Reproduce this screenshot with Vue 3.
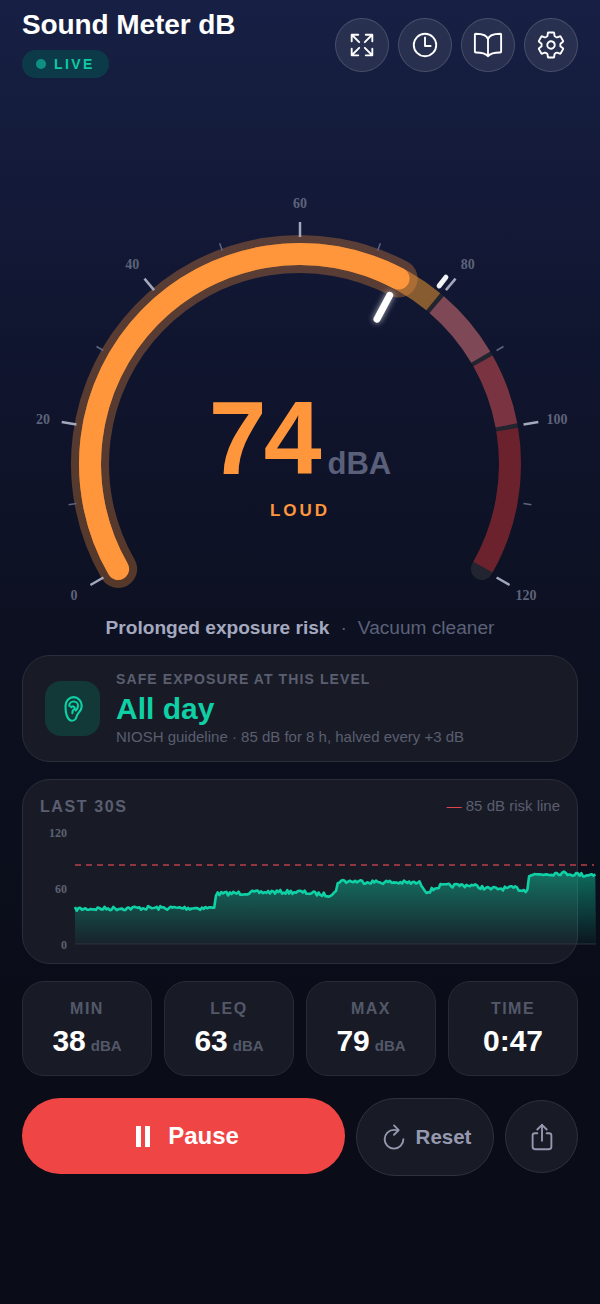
<template>
  <div class="page">
    <header class="top">
      <div>
        <h1 class="title">Sound Meter dB</h1>
        <div class="live"><span class="dot"></span>LIVE</div>
      </div>
      <div class="top-btns">
        <button class="round">
          <svg viewBox="0 0 512 512" class="ico"><path d="M432 320v112H320M421.800 421.770 304 304M80 192V80h112M90.200 90.230 208 208M320 80h112v112M421.770 90.200 304 208M192 432H80V320M90.230 421.800 208 304" /></svg>
        </button>
        <button class="round">
          <svg viewBox="0 0 512 512" class="ico"><path d="M256 64C150 64 64 150 64 256s86 192 192 192 192-86 192-192S362 64 256 64z" /><path d="M256 128v144h96" /></svg>
        </button>
        <button class="round">
          <svg viewBox="0 0 512 512" class="ico"><path d="M256 160c16-63.160 76.430-95.410 208-96a15.940 15.940 0 0 1 16 16v288a16 16 0 0 1-16 16c-128 0-177.450 25.810-208 64-30.370-38-80-64-208-64-9.880 0-16-8.050-16-17.930V80a15.940 15.940 0 0 1 16-16c131.570.59 192 32.840 208 96zM256 160v288" /></svg>
        </button>
        <button class="round">
          <svg viewBox="0 0 512 512" class="ico"><path d="M262.290 192.310a64 64 0 1 0 57.400 57.400 64.130 64.130 0 0 0-57.400-57.400zM416.390 256a154.340 154.340 0 0 1-1.530 20.790l45.210 35.460a10.810 10.810 0 0 1 2.450 13.750l-42.770 74a10.810 10.810 0 0 1-13.140 4.590l-44.900-18.080a16.110 16.110 0 0 0-15.170 1.750A164.480 164.480 0 0 1 325 400.800a15.940 15.940 0 0 0-8.820 12.140l-6.730 47.890a11.080 11.080 0 0 1-10.680 9.170h-85.540a11.110 11.110 0 0 1-10.690-8.870l-6.720-47.820a16.070 16.070 0 0 0-9-12.220 155.300 155.300 0 0 1-21.460-12.570 16 16 0 0 0-15.110-1.710l-44.890 18.070a10.810 10.810 0 0 1-13.140-4.580l-42.770-74a10.800 10.800 0 0 1 2.450-13.750l38.210-30a16.050 16.050 0 0 0 6-14.080c-.36-4.170-.58-8.330-.58-12.500s.21-8.270.58-12.350a16 16 0 0 0-6.070-13.940l-38.190-30A10.810 10.810 0 0 1 49.480 186l42.770-74a10.810 10.810 0 0 1 13.140-4.590l44.900 18.080a16.110 16.110 0 0 0 15.170-1.750A164.480 164.480 0 0 1 187 111.200a15.940 15.940 0 0 0 8.820-12.140l6.730-47.890A11.080 11.080 0 0 1 213.230 42h85.540a11.110 11.110 0 0 1 10.690 8.870l6.720 47.820a16.070 16.070 0 0 0 9 12.220 155.300 155.300 0 0 1 21.460 12.570 16 16 0 0 0 15.110 1.710l44.890-18.070a10.810 10.810 0 0 1 13.140 4.580l42.770 74a10.800 10.800 0 0 1-2.450 13.750l-38.210 30a16.050 16.050 0 0 0-6.050 14.080c.33 4.140.55 8.300.55 12.470z" /></svg>
        </button>
      </div>
    </header>

    <!-- gauge -->
    <div class="gauge">
      <svg width="600" height="430" viewBox="0 190 600 430" class="gauge-svg">
        <path :d="arc(0, 120)" class="track" />
        <path v-for="s in segments" :key="s.from" :d="arc(s.from + 0.3, s.to - 0.3)" fill="none" stroke-width="22" :stroke="s.color" />
        <path :d="arc(0, level)" class="halo" />
        <path :d="arc(0, level)" class="fill" />
        <line v-for="t in ticks" :key="t.v" :x1="t.x1" :y1="t.y1" :x2="t.x2" :y2="t.y2" :class="t.major ? 'tick-major' : 'tick-minor'" />
        <text v-for="t in labels" :key="t.v" :x="t.x" :y="t.y" class="tick-label">{{ t.v }}</text>
        <line :x1="maxMark.x1" :y1="maxMark.y1" :x2="maxMark.x2" :y2="maxMark.y2" class="max-mark" />
        <line :x1="needle.x1" :y1="needle.y1" :x2="needle.x2" :y2="needle.y2" class="needle" />
      </svg>
      <div class="readout">
        <div class="reading"><span class="num">74</span><span class="unit">dBA</span></div>
        <div class="band">LOUD</div>
      </div>
    </div>

    <p class="caption"><b>Prolonged exposure risk</b><i>·</i><span>Vacuum cleaner</span></p>

    <section class="card safe">
      <div class="ear">
        <svg viewBox="0 0 24 24" width="30" height="30"><path d="M6 9.500a6.500 7 0 0 1 13 0c0 3-1.600 4.400-3 6.200-1 1.300-1.200 3-2 4.300-1 1.400-3.200 1.600-4.600.8-1.600-.9-2.100-2.600-2.600-4.300C6.200 14.500 6 12 6 9.500z" /><path d="M9 9.500a3.500 3.500 0 0 1 7 0c0 1.500-.8 2.600-1.800 3.600M10.500 10.500c1-1 2.700-.7 2.900.6.100 1-.9 1.500-1.600 2.200l-.3 2" /></svg>
      </div>
      <div>
        <div class="safe-label">SAFE EXPOSURE AT THIS LEVEL</div>
        <div class="safe-value">All day</div>
        <div class="safe-sub">NIOSH guideline · 85 dB for 8 h, halved every +3 dB</div>
      </div>
    </section>

    <section class="card history">
      <div class="hist-head">
        <span class="hist-title">LAST 30S</span>
        <span class="hist-legend"><em>—</em> 85 dB risk line</span>
      </div>
      <svg class="chart" width="556" height="128" viewBox="40 824 556 128">
        <defs>
          <linearGradient id="area" x1="0" y1="0" x2="0" y2="1">
            <stop offset="0" stop-color="#10d0a5" stop-opacity="0.48" />
            <stop offset="1" stop-color="#10d0a5" stop-opacity="0.04" />
          </linearGradient>
        </defs>
        <text x="67" y="837" class="axis">120</text>
        <text x="67" y="893" class="axis">60</text>
        <text x="67" y="949" class="axis">0</text>
        <line x1="75" y1="944" x2="596" y2="944" class="base" />
        <line x1="75" y1="865" x2="594" y2="865" class="risk" />
        <path :d="areaPath" fill="url(#area)" />
        <path :d="linePath" class="trace" />
      </svg>
    </section>

    <section class="stats">
      <div v-for="s in stats" :key="s.label" class="stat">
        <div class="stat-label">{{ s.label }}</div>
        <div class="stat-value">{{ s.value }}<small v-if="s.unit">{{ s.unit }}</small></div>
      </div>
    </section>

    <section class="actions">
      <button class="pause">
        <span class="bars"><i></i><i></i></span>
        Pause
      </button>
      <button class="reset">
        <svg viewBox="0 0 512 512" width="30" height="30" class="ico-grey"><path d="M320 146s24.360-12-64-12a160 160 0 1 0 160 160" /><path d="M256 58l80 80-80 80" /></svg>
        Reset
      </button>
      <button class="share">
        <svg viewBox="0 0 512 512" width="30" height="30" class="ico-grey"><path d="M336 192h40a40 40 0 0 1 40 40v192a40 40 0 0 1-40 40H136a40 40 0 0 1-40-40V232a40 40 0 0 1 40-40h40" /><path d="M336 128l-80-80-80 80" /><path d="M256 321V48" /></svg>
      </button>
    </section>
  </div>
</template>

<script setup>
import { computed } from 'vue'

const CX = 300
const CY = 464
const R = 210
const level = 74

// 0 dB sits at -120deg from the top, 120 dB at +120deg
function angle(v) {
  return ((-120 + (v / 120) * 240) * Math.PI) / 180
}
function polar(v, r) {
  const a = angle(v)
  return { x: +(CX + r * Math.sin(a)).toFixed(2), y: +(CY - r * Math.cos(a)).toFixed(2) }
}
function arc(from, to) {
  const a = polar(from, R)
  const b = polar(to, R)
  const large = (to - from) * 2 > 180 ? 1 : 0
  return `M${a.x} ${a.y}A${R} ${R} 0 ${large} 1 ${b.x} ${b.y}`
}
function radial(v, r1, r2) {
  const a = polar(v, r1)
  const b = polar(v, r2)
  return { x1: a.x, y1: a.y, x2: b.x, y2: b.y }
}

const segments = [
  { from: 0, to: 80, color: '#875c30' },
  { from: 80, to: 90, color: '#7f4856' },
  { from: 90, to: 100, color: '#7a3340' },
  { from: 100, to: 120, color: '#6c222d' }
]

const ticks = []
for (let v = 0; v <= 120; v += 10) {
  const major = v % 20 === 0
  ticks.push({ v, major, ...radial(v, 227, major ? 242 : 235) })
}
const labels = []
for (let v = 0; v <= 120; v += 20) {
  const p = polar(v, 261)
  labels.push({ v, x: p.x, y: p.y + 5 })
}
const needle = radial(level, 164, 191)
const maxMark = radial(79, 226, 237)

// [x, y] steps of the last 30 s trace
const X0 = 75
const X1 = 596
const knots = [
  [75, 909], [140, 908], [214, 908], [216, 894], [270, 892], [300, 892], [328, 895], [336, 892],
  [338, 881], [420, 883], [427, 892], [440, 886], [470, 885], [490, 889], [515, 888], [527, 891],
  [529, 875], [560, 873], [585, 875], [596, 874]
]
function baseY(x) {
  for (let i = 1; i < knots.length; i++) {
    if (x <= knots[i][0]) {
      const [ax, ay] = knots[i - 1]
      const [bx, by] = knots[i]
      return ay + ((x - ax) / (bx - ax)) * (by - ay)
    }
  }
  return 874
}
let seed = 7
function noise() {
  seed = (seed * 16807) % 2147483647
  return seed / 2147483647 - 0.5
}
const points = []
for (let x = X0; x <= X1; x += 1.74) {
  points.push([+x.toFixed(1), +(baseY(x) + noise() * 4).toFixed(1)])
}
const linePath = computed(() => 'M' + points.map((p) => p.join(' ')).join('L'))
const areaPath = computed(() => `${linePath.value}L${X1} 944L${X0} 944Z`)

const stats = [
  { label: 'MIN', value: '38', unit: 'dBA' },
  { label: 'LEQ', value: '63', unit: 'dBA' },
  { label: 'MAX', value: '79', unit: 'dBA' },
  { label: 'TIME', value: '0:47' }
]
</script>

<style>
html, body { margin: 0; background: #0a0d18; }
</style>

<style scoped>
.page {
  width: 600px;
  height: 1304px;
  box-sizing: border-box;
  overflow: hidden;
  padding: 0 22px;
  background: linear-gradient(180deg, #172044 0%, #111631 24%, #0c1020 50%, #0a0d18 78%, #0a0d18 100%);
  font-family: "Liberation Sans", Arial, sans-serif;
}
button { font-family: inherit; cursor: pointer; }

.top { display: flex; justify-content: space-between; height: 190px; }
.title { margin: 8px 0 0; font-size: 28px; line-height: 34px; font-weight: 700; color: #fff; letter-spacing: -0.1px; }
.live {
  display: inline-flex;
  align-items: center;
  gap: 8px;
  margin-top: 8px;
  height: 28px;
  padding: 0 14px;
  border-radius: 14px;
  background: #0d3a48;
  color: #0fc9a4;
  font-size: 14px;
  font-weight: 700;
  letter-spacing: 2.4px;
}
.dot { width: 10px; height: 10px; border-radius: 50%; background: #0e8f80; }
.top-btns { display: flex; gap: 9px; margin-top: 18px; height: 54px; }
.round {
  width: 54px;
  height: 54px;
  padding: 0;
  display: flex;
  align-items: center;
  justify-content: center;
  border-radius: 50%;
  background: rgba(255, 255, 255, 0.08);
  border: 1px solid rgba(255, 255, 255, 0.15);
}
.ico { width: 30px; height: 30px; fill: none; stroke: #fff; stroke-width: 32; stroke-linecap: round; stroke-linejoin: round; }

.gauge { position: relative; margin: 0 -22px; height: 430px; }
.gauge-svg { display: block; }
.track { fill: none; stroke: #22242f; stroke-width: 22; stroke-linecap: round; }
.halo { fill: none; stroke: rgba(255, 150, 60, 0.3); stroke-width: 38; stroke-linecap: round; }
.fill { fill: none; stroke: #ff963c; stroke-width: 22; stroke-linecap: round; }
.tick-major { stroke: #a3a8bd; stroke-width: 2.5; }
.tick-minor { stroke: #5f6580; stroke-width: 1.5; }
.tick-label { font-family: "Liberation Serif", serif; font-size: 14px; font-weight: 700; fill: #5d6379; text-anchor: middle; }
.max-mark { stroke: #f2f3f7; stroke-width: 5; stroke-linecap: round; }
.needle { stroke: #fff; stroke-width: 7; stroke-linecap: round; filter: drop-shadow(0 0 3px rgba(255, 255, 255, 0.7)); }

.readout { position: absolute; left: 0; right: 0; top: 193px; text-align: center; }
.reading { display: flex; justify-content: center; align-items: baseline; height: 109px; }
.num { font-size: 104px; line-height: 110px; font-weight: 700; color: #ff963c; letter-spacing: -3px; }
.unit { margin-left: 9px; font-size: 31px; font-weight: 700; color: #5a607a; }
.band { margin-top: 9px; font-size: 17px; line-height: 20px; font-weight: 700; letter-spacing: 3px; color: #ff963c; }

.caption { margin: -4px 0 0; height: 24px; display: flex; justify-content: center; align-items: center; font-size: 19.100px; line-height: 24px; }
.caption b { color: #a5a9bf; }
.caption i { margin: 0 11px; color: #5c6178; font-style: normal; }
.caption span { color: #5c6178; }

.card { box-sizing: border-box; background: #181b26; border: 1px solid #2b2e3a; border-radius: 28px; }
.safe { margin-top: 15px; height: 107px; display: flex; align-items: center; gap: 16px; padding: 0 22px; }
.ear { width: 55px; height: 55px; border-radius: 16px; background: #133838; display: flex; align-items: center; justify-content: center; }
.ear svg { fill: none; stroke: #0fcfa5; stroke-width: 1.7; stroke-linecap: round; stroke-linejoin: round; }
.safe-label { font-size: 14px; line-height: 16px; font-weight: 700; letter-spacing: 1.1px; color: #5a5e70; }
.safe-value { margin-top: 3px; font-size: 30px; line-height: 37px; font-weight: 700; color: #0fcfa5; }
.safe-sub { margin-top: 1px; font-size: 15px; line-height: 18px; color: #5a5e70; }

.history { margin-top: 17px; height: 185px; padding: 17px 17px 0; }
.hist-head { display: flex; justify-content: space-between; align-items: center; height: 20px; }
.hist-title { font-size: 16px; font-weight: 700; letter-spacing: 1.6px; color: #5a5e70; }
.hist-legend { align-self: flex-start; font-size: 15px; line-height: 18px; color: #5a5e70; }
.hist-legend em { font-style: normal; color: #e0454f; }
.chart { display: block; flex-shrink: 0; margin-top: 7px; overflow: visible; }
.axis { font-family: "Liberation Serif", serif; font-size: 12px; font-weight: 700; fill: #5d6172; text-anchor: end; }
.base { stroke: #2d303c; stroke-width: 1; }
.risk { stroke: #b8404a; stroke-width: 1.5; stroke-dasharray: 6 5; }
.trace { fill: none; stroke: #10d0a5; stroke-width: 2.6; stroke-linejoin: round; }

.stats { margin-top: 17px; display: grid; grid-template-columns: repeat(4, 130px); gap: 12px; }
.stat { box-sizing: border-box; height: 95px; border-radius: 22px; background: #181b26; border: 1px solid #282b36; text-align: center; padding-top: 17px; }
.stat-label { font-size: 16px; line-height: 20px; font-weight: 700; letter-spacing: 1.5px; color: #535869; }
.stat-value { margin-top: 4px; font-size: 30px; line-height: 36px; font-weight: 700; color: #fff; }
.stat-value small { margin-left: 5px; font-size: 15px; color: #535869; }

.actions { margin-top: 22px; display: flex; align-items: flex-start; gap: 11px; }
.pause {
  flex: 1;
  height: 76px;
  border: none;
  border-radius: 38px;
  background: #f04545;
  color: #fff;
  font-size: 24px;
  font-weight: 700;
  display: flex;
  align-items: center;
  justify-content: center;
  gap: 18px;
  padding: 0 0 0 8px;
}
.bars { display: flex; gap: 4px; }
.bars i { display: block; width: 5px; height: 21px; background: #fff; }
.reset {
  width: 138px;
  height: 78px;
  border-radius: 39px;
  background: #181b26;
  border: 1px solid #2f323e;
  color: #9599b0;
  font-size: 20.500px;
  font-weight: 700;
  display: flex;
  align-items: center;
  justify-content: center;
  gap: 7px;
  padding: 0;
}
.share {
  width: 73px;
  height: 73px;
  margin-top: 2px;
  border-radius: 50%;
  background: #181b26;
  border: 1px solid #2f323e;
  display: flex;
  align-items: center;
  justify-content: center;
  padding: 0;
}
.ico-grey { fill: none; stroke: #9599b0; stroke-width: 32; stroke-linecap: round; stroke-linejoin: round; }
</style>
